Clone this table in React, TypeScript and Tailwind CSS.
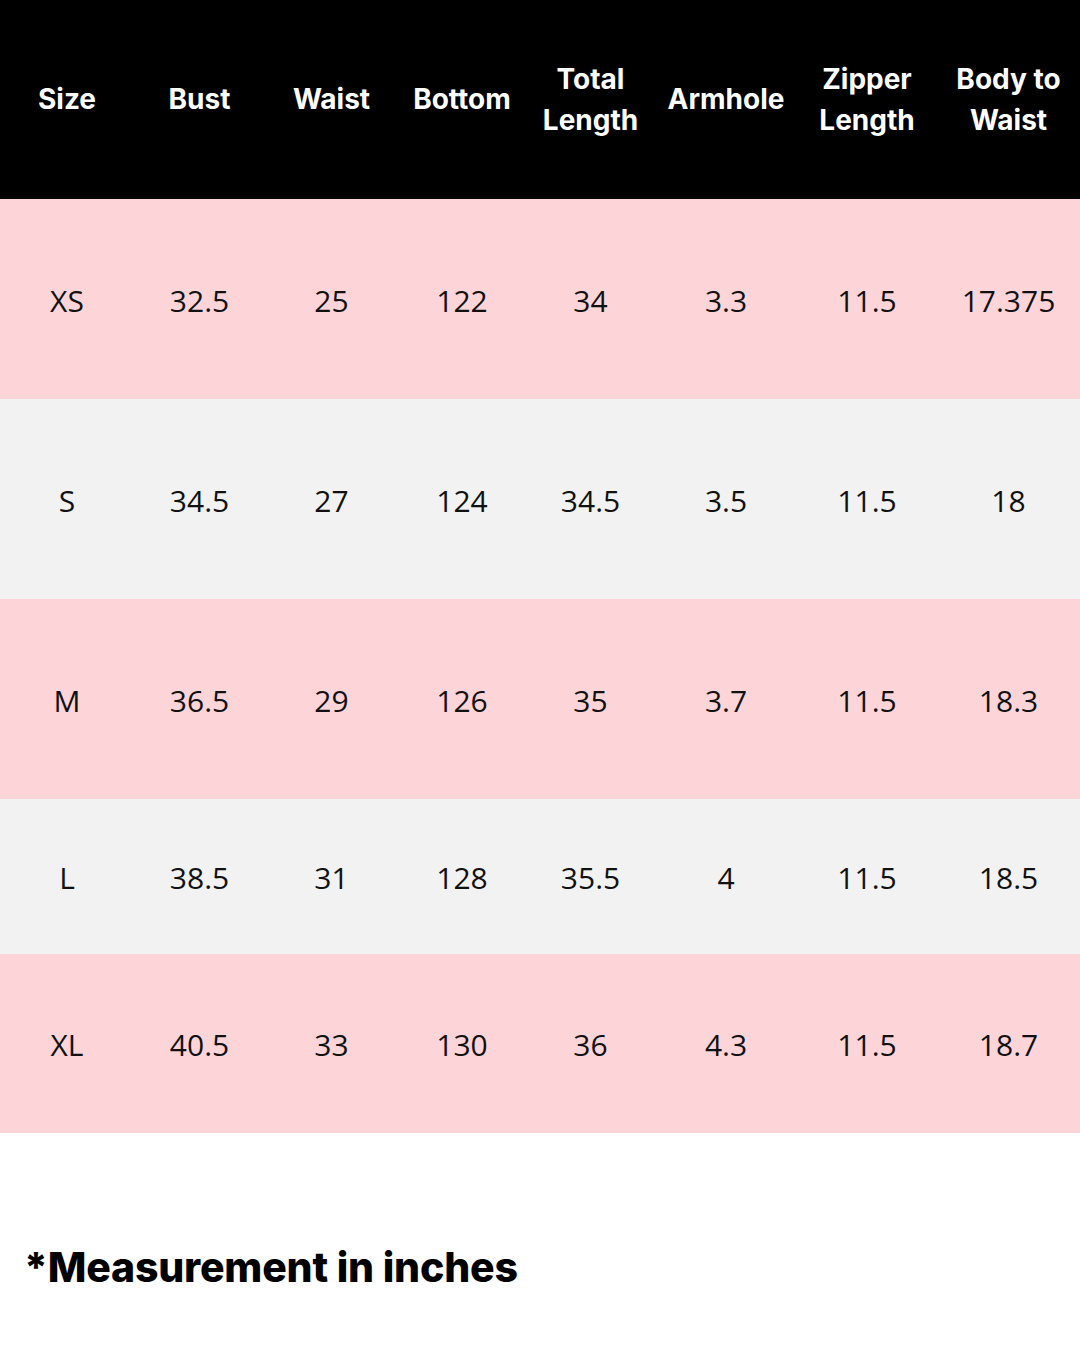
const headers = [
  ["Size"],
  ["Bust"],
  ["Waist"],
  ["Bottom"],
  ["Total", "Length"],
  ["Armhole"],
  ["Zipper", "Length"],
  ["Body to", "Waist"],
];

const rows = [
  { h: "h-[200px]", bg: "bg-[#fdd5d8]", cells: ["XS", "32.5", "25", "122", "34", "3.3", "11.5", "17.375"] },
  { h: "h-[200px]", bg: "bg-[#f2f2f2]", cells: ["S", "34.5", "27", "124", "34.5", "3.5", "11.5", "18"] },
  { h: "h-[200px]", bg: "bg-[#fdd5d8]", cells: ["M", "36.5", "29", "126", "35", "3.7", "11.5", "18.3"] },
  { h: "h-[155px]", bg: "bg-[#f2f2f2]", cells: ["L", "38.5", "31", "128", "35.5", "4", "11.5", "18.5"] },
  { h: "h-[179px]", bg: "bg-[#fdd5d8]", cells: ["XL", "40.5", "33", "130", "36", "4.3", "11.5", "18.7"] },
];

// column widths match the sheet, not equal splits
const cols = "grid grid-cols-[134px_131px_133px_128px_129px_142px_140px_143px]";

export default function App() {
  return (
    <div className="w-[1080px] h-[1350px] bg-white flex flex-col">
      <div className={`${cols} h-[199px] bg-black text-white font-['Inter',sans-serif] font-bold text-[28px] leading-[41px]`}>
        {headers.map((lines) => (
          <div key={lines.join(" ")} className="flex flex-col items-center justify-center text-center">
            {lines.map((l) => (
              <span key={l}>{l}</span>
            ))}
          </div>
        ))}
      </div>

      {rows.map((row) => (
        <div
          key={row.cells[0]}
          className={`${cols} ${row.h} ${row.bg} text-[#111] font-['Open_Sans',sans-serif] text-[30px] pt-[2px]`}
        >
          {row.cells.map((c, i) => (
            <div key={i} className="flex items-center justify-center">
              {c}
            </div>
          ))}
        </div>
      ))}

      <p className="pl-[24px] pt-[104px] font-['Inter',sans-serif] font-extrabold text-[41px] tracking-[-0.2px] text-black">
        *Measurement in inches
      </p>
    </div>
  );
}
